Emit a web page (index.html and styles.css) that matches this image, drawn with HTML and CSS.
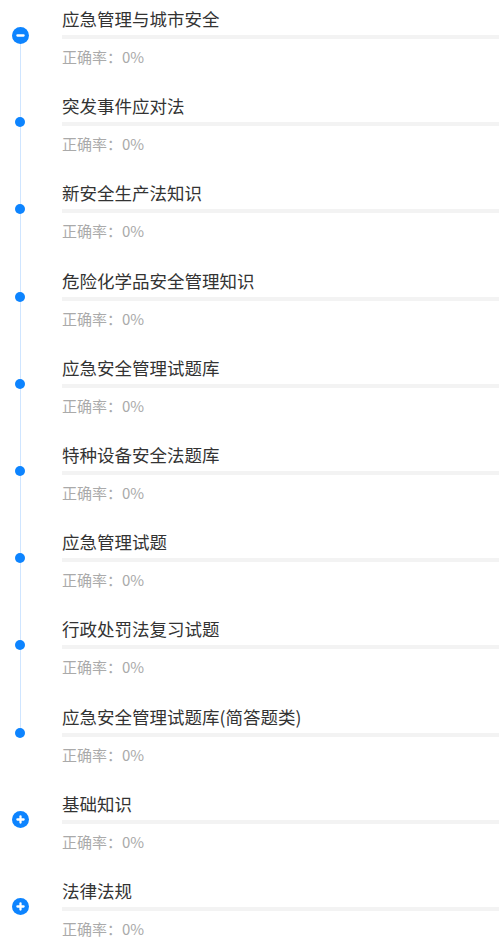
FILE: index.html
```html
<!DOCTYPE html>
<html lang="zh-CN">
<head>
  <meta charset="UTF-8">
  <meta name="viewport" content="width=device-width, initial-scale=1.0">
  <title>章节练习</title>
  <link rel="stylesheet" href="styles.css">
</head>
<body>

  <ul class="chapters">
    <li class="chapter open">
      <div class="row">
        <div class="node">
          <svg class="toggle" viewBox="0 0 18 18"><circle cx="9" cy="9" r="9" fill="#0d84ff"/><rect x="4.5" y="7.8" width="9" height="2.4" rx="1.2" fill="#fff"/></svg>
        </div>
        <div class="info">
          <h3 class="title">应急管理与城市安全</h3>
          <div class="bar"><i style="width: 0%"></i></div>
          <p class="rate">正确率：0%</p>
        </div>
      </div>

      <div class="row">
        <div class="node"><span class="dot"></span></div>
        <div class="info">
          <h3 class="title">突发事件应对法</h3>
          <div class="bar"><i style="width: 0%"></i></div>
          <p class="rate">正确率：0%</p>
        </div>
      </div>

      <div class="row">
        <div class="node"><span class="dot"></span></div>
        <div class="info">
          <h3 class="title">新安全生产法知识</h3>
          <div class="bar"><i style="width: 0%"></i></div>
          <p class="rate">正确率：0%</p>
        </div>
      </div>

      <div class="row">
        <div class="node"><span class="dot"></span></div>
        <div class="info">
          <h3 class="title">危险化学品安全管理知识</h3>
          <div class="bar"><i style="width: 0%"></i></div>
          <p class="rate">正确率：0%</p>
        </div>
      </div>

      <div class="row">
        <div class="node"><span class="dot"></span></div>
        <div class="info">
          <h3 class="title">应急安全管理试题库</h3>
          <div class="bar"><i style="width: 0%"></i></div>
          <p class="rate">正确率：0%</p>
        </div>
      </div>

      <div class="row">
        <div class="node"><span class="dot"></span></div>
        <div class="info">
          <h3 class="title">特种设备安全法题库</h3>
          <div class="bar"><i style="width: 0%"></i></div>
          <p class="rate">正确率：0%</p>
        </div>
      </div>

      <div class="row">
        <div class="node"><span class="dot"></span></div>
        <div class="info">
          <h3 class="title">应急管理试题</h3>
          <div class="bar"><i style="width: 0%"></i></div>
          <p class="rate">正确率：0%</p>
        </div>
      </div>

      <div class="row">
        <div class="node"><span class="dot"></span></div>
        <div class="info">
          <h3 class="title">行政处罚法复习试题</h3>
          <div class="bar"><i style="width: 0%"></i></div>
          <p class="rate">正确率：0%</p>
        </div>
      </div>

      <div class="row">
        <div class="node"><span class="dot"></span></div>
        <div class="info">
          <h3 class="title">应急安全管理试题库(简答题类)</h3>
          <div class="bar"><i style="width: 0%"></i></div>
          <p class="rate">正确率：0%</p>
        </div>
      </div>
    </li>

    <li class="chapter">
      <div class="row">
        <div class="node">
          <svg class="toggle" viewBox="0 0 18 18"><circle cx="9" cy="9" r="9" fill="#0d84ff"/><rect x="4.5" y="7.8" width="9" height="2.4" rx="1.2" fill="#fff"/><rect x="7.8" y="4.5" width="2.4" height="9" rx="1.2" fill="#fff"/></svg>
        </div>
        <div class="info">
          <h3 class="title">基础知识</h3>
          <div class="bar"><i style="width: 0%"></i></div>
          <p class="rate">正确率：0%</p>
        </div>
      </div>
    </li>

    <li class="chapter">
      <div class="row">
        <div class="node">
          <svg class="toggle" viewBox="0 0 18 18"><circle cx="9" cy="9" r="9" fill="#0d84ff"/><rect x="4.5" y="7.8" width="9" height="2.4" rx="1.2" fill="#fff"/><rect x="7.8" y="4.5" width="2.4" height="9" rx="1.2" fill="#fff"/></svg>
        </div>
        <div class="info">
          <h3 class="title">法律法规</h3>
          <div class="bar"><i style="width: 0%"></i></div>
          <p class="rate">正确率：0%</p>
        </div>
      </div>
    </li>
  </ul>

</body>
</html>
```

FILE: styles.css
```css
body {
  margin: 0;
  padding: 0;
  background-color: #fff;
  font-family: "Noto Sans CJK SC", "Noto Sans", sans-serif;
}
.chapters {
  list-style: none;
  margin: 0;
  padding: 0;
}
.chapter {
  position: relative;
}
/* timeline line for the expanded chapter */
.chapter.open::before {
  content: "";
  position: absolute;
  left: 20px;
  top: 35px;
  bottom: 52.2px;
  width: 1px;
  background-color: #cfe5ff;
}
.row {
  display: flex;
  height: 87.2px;
  box-sizing: border-box;
  padding-top: 7px;
}
.node {
  position: relative;
  z-index: 1;
  width: 40px;
  flex-shrink: 0;
  display: flex;
  justify-content: center;
  align-items: flex-start;
}
.toggle {
  width: 17px;
  height: 17px;
  margin-top: 19.5px;
}
.dot {
  width: 10px;
  height: 10px;
  margin-top: 23px;
  border-radius: 50%;
  background-color: #0d84ff;
}
.info {
  flex: 1;
  margin-left: 22px;
}
.title {
  margin: 0;
  font-size: 17.5px;
  font-weight: normal;
  line-height: 24px;
  color: #333;
}
.bar {
  height: 4px;
  margin-top: 4px;
  background-color: #f3f3f3;
}
.bar i {
  display: block;
  height: 100%;
  background-color: #0d84ff;
}
.rate {
  margin: 8px 0 0;
  font-size: 15px;
  line-height: 20px;
  color: #aaa;
}
```
